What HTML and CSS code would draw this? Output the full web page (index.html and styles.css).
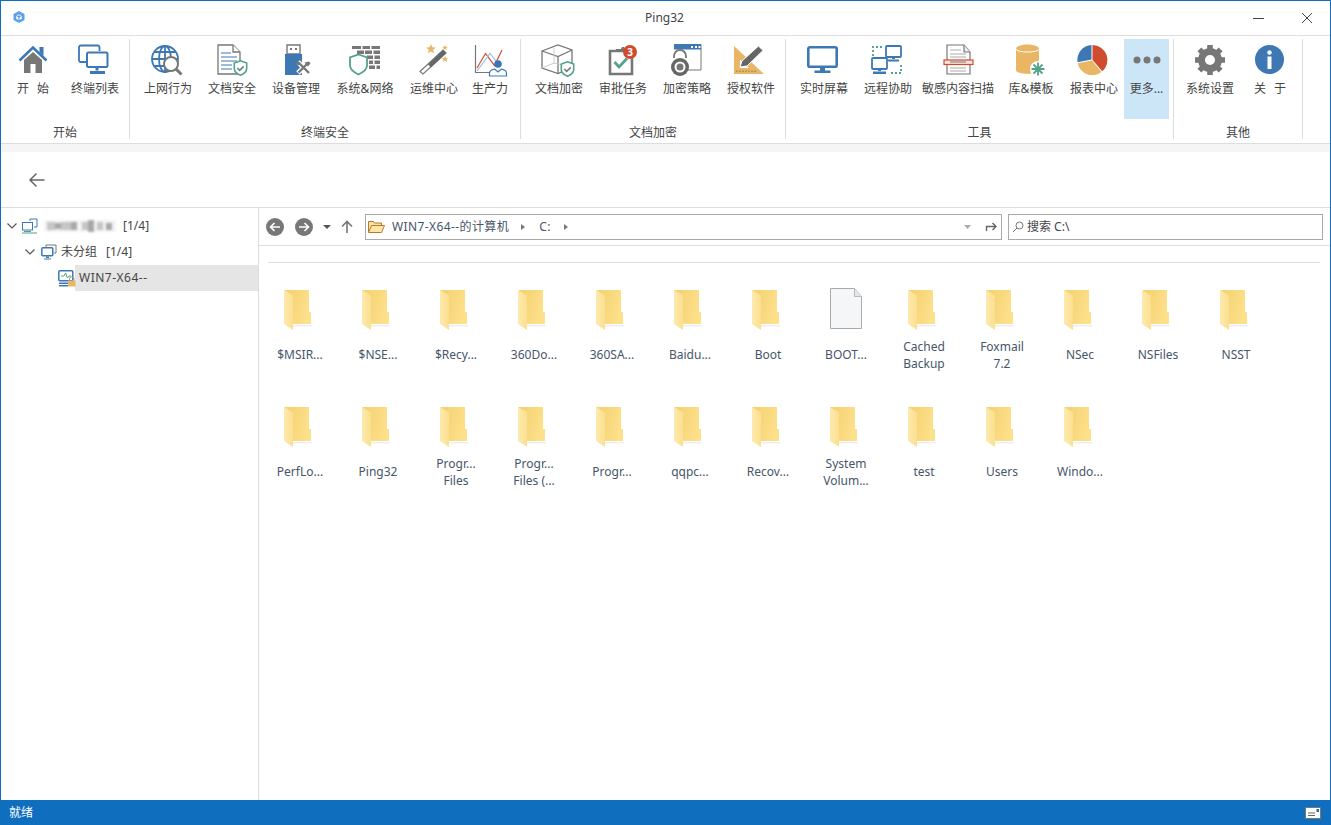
FILE: index.html
```html
<!DOCTYPE html>
<html lang="zh-CN">
<head>
<meta charset="utf-8">
<title>Ping32</title>
<link rel="stylesheet" href="styles.css">
</head>
<body>
<svg class="defs" width="0" height="0">
  <defs>
    <linearGradient id="fb" x1="0" x2="1" y1="0" y2="0.3"><stop offset="0" stop-color="#f3cf6e"/><stop offset="1" stop-color="#fde08a"/></linearGradient>
    <linearGradient id="ff" x1="0" x2="1" y1="0" y2="0"><stop offset="0" stop-color="#fdeaae"/><stop offset="1" stop-color="#fcdf90"/></linearGradient>
    <symbol id="folder" viewBox="0 0 28 41">
      <path d="M9 35h19v1.500H9z" fill="#eee"/>
      <path d="M0 0h25v22h2v12H9V8z" fill="url(#fb)"/>
      <path d="M0 0l9 5.500V40L0 34z" fill="url(#ff)"/>
    </symbol>
    <symbol id="shield" viewBox="0 0 14 15">
      <path d="M7 .8l5.800 2V8c0 3-2.500 5-5.800 6.300C3.700 13 1.200 11 1.200 8V2.800z" fill="#fff" stroke="#52a387" stroke-width="1.500"/>
      <path d="M4 7.500l2.200 2.200L10 6" fill="none" stroke="#777" stroke-width="1.400"/>
    </symbol>
  </defs>
</svg>
<div class="window">
  <header class="titlebar">
    <svg class="logo" width="14" height="14" viewBox="0 0 14 14"><path d="M7 1l5.500 3v6L7 13 1.500 10V4z" fill="#5aa0ef"/><path d="M7 4l2.800 1.500v3.200L7 10.200 4.200 8.700V5.500z" fill="#fff"/><path d="M7 4v6.200M4.200 5.500L7 7l2.800-1.500" stroke="#2f74d0" fill="none" stroke-width=".8"/></svg>
    <span class="title">Ping32</span>
    <svg class="winbtn" width="12" height="12" viewBox="0 0 12 12"><path d="M0 6.500h11" stroke="#444" stroke-width="1"/></svg>
    <svg class="winbtn close" width="12" height="12" viewBox="0 0 12 12"><path d="M1 1l10 10M11 1L1 11" stroke="#444" stroke-width="1"/></svg>
  </header>

  <nav class="ribbon">
    <section class="group g1">
      <div class="items">
        <div class="item w64">
          <svg class="ico" viewBox="0 0 32 32"><path d="M7 16l9-8 9 8v13h-6.500v-9h-5v9H7z" fill="#777"/><path d="M2.500 16.500L16 3.500l13.500 13" fill="none" stroke="#3d78b5" stroke-width="2.600"/><path d="M22.500 3h4v9l-4-4z" fill="#3d78b5"/></svg>
          <span class="spaced">开 始</span>
        </div>
        <div class="item w60">
          <svg class="ico" viewBox="2 0 32 32"><path d="M11 18H3.500a2 2 0 0 1-1.500-1.500V3a2 2 0 0 1 2-1.500h17A2 2 0 0 1 22.500 3v4" fill="none" stroke="#3d78b5" stroke-width="1.800"/><rect x="10" y="8.500" width="20.500" height="14.500" rx="1.500" fill="#fff" stroke="#3d78b5" stroke-width="2"/><path d="M18.500 23.500h3v3h-3zM13 27h15v3H13z" fill="#3d78b5"/></svg>
          <span>终端列表</span>
        </div>
      </div>
      <div class="glabel">开始</div>
    </section>

    <section class="group g2">
      <div class="items">
        <div class="item w64">
          <svg class="ico" viewBox="1 0 32 32"><g fill="none" stroke="#3d78b5" stroke-width="1.800"><circle cx="14" cy="15" r="13"/><ellipse cx="14" cy="15" rx="6" ry="13"/><path d="M1 15h26M3 8h22M3 22h22M14 2v26"/></g><circle cx="20" cy="20" r="7" fill="#fff" stroke="#777" stroke-width="2"/><path d="M25 25l5.500 5.500" stroke="#777" stroke-width="3"/></svg>
          <span>上网行为</span>
        </div>
        <div class="item w64">
          <svg class="ico" viewBox="0 0 32 32"><path d="M2 1h15l7 7v22H2z" fill="#fff" stroke="#777" stroke-width="1.300"/><path d="M17 1v7h7" fill="#fff" stroke="#777" stroke-width="1.300"/><path d="M5 9h10M5 13h16M5 17h16M5 21h11M5 25h11" stroke="#3d78b5" stroke-width="1.200"/><use href="#shield" x="17" y="16" width="15" height="16"/></svg>
          <span>文档安全</span>
        </div>
        <div class="item w64">
          <svg class="ico" viewBox="0 0 32 32"><path d="M7 1h13v9H7z" fill="#fff" stroke="#777" stroke-width="1.400"/><path d="M10 4h2v2h-2zM15 4h2v2h-2z" fill="#777"/><path d="M5 10h17v21H5z" fill="#3d78b5"/><path d="M18 18l11 11M29 18L18 29" stroke="#fff" stroke-width="5"/><path d="M19 19l10 10M28 19L18.500 28.500" stroke="#777" stroke-width="2.400"/><path d="M24.500 18.500l4.500-1 1.500 2-2.500 3zM15.500 20l2-3 3 1.500-2 3z" fill="#777"/></svg>
          <span>设备管理</span>
        </div>
        <div class="item w74">
          <svg class="ico" viewBox="0 0 32 32"><g fill="#777"><path d="M3 2h9v3H3zM13.500 2H21v3h-7.500zM22.500 2H31v3h-8.500zM8 6.500h7V10H8zM16 6.500h7V10h-7zM24.500 6.500H31V10h-6.500zM18 11.500h6V15h-6zM25.500 11.500H31V15h-5.500zM20 16.500h4V20h-4zM25.500 16.500H31V20h-5.500zM20 21.500h6V25h-6zM27.500 21.500H31V25h-3.500z"/></g><path d="M9.500 10.500l8.500 3v8c0 4-3.500 6.500-8.500 9-5-2.500-8.500-5-8.500-9v-8z" fill="#fff" stroke="#52a387" stroke-width="1.800"/></svg>
          <span>系统&amp;网络</span>
        </div>
        <div class="item w64">
          <svg class="ico" viewBox="0 0 32 32"><path d="M2 27.500L25 6l3 3L5 30z" fill="#fff" stroke="#777" stroke-width="1.200"/><path d="M10 20.500l15-14.500 3 3-15 14.500z" fill="#666"/><path d="M13 0l1.400 3.200 3.400.3-2.600 2.300.8 3.400L13 7.500 10 9.200l.8-3.400L8.200 3.500l3.400-.3zM27 1l.8 1.700 1.900.2-1.400 1.300.4 1.900L27 5.100l-1.700 1 .4-1.900-1.400-1.300 1.900-.2zM27 12l.9 2 2.200.2-1.600 1.500.5 2.200-2-1.100-2 1.100.5-2.200-1.600-1.500 2.200-.2z" fill="#e9b665"/></svg>
          <span>运维中心</span>
        </div>
        <div class="item w48">
          <svg class="ico" viewBox="0 0 32 32"><path d="M1.500 1v27.500H21" fill="none" stroke="#777" stroke-width="1.200"/><path d="M3 24L11.500 9.500l9 12L28 6" fill="none" stroke="#cf4d2e" stroke-width="1.200"/><path d="M3 27L16 9.500l8 10" fill="none" stroke="#9dbde0" stroke-width="1.200"/><circle cx="24" cy="20" r="3.800" fill="#3d78b5"/><path d="M15.500 32v-3c0-2.500 3-3.500 5-4l3.500 3 3.500-3c2 .5 5 1.500 5 4v3z" fill="#fff" stroke="#3d78b5" stroke-width="1.200"/></svg>
          <span>生产力</span>
        </div>
      </div>
      <div class="glabel">终端安全</div>
    </section>

    <section class="group g3">
      <div class="items">
        <div class="item w64">
          <svg class="ico" viewBox="0 0 32 32"><g fill="none" stroke="#777" stroke-width="1.300"><path d="M-1 7L15 1l14 5v17l-14 6.500L-1 24z"/><path d="M-1 7l16 5.500L29 6M15 12.500v17"/></g><path d="M-1 24L11 19l18 4M11 19V3.500" fill="none" stroke="#ccc" stroke-width="1"/><use href="#shield" x="17" y="17" width="15" height="16"/></svg>
          <span>文档加密</span>
        </div>
        <div class="item w64">
          <svg class="ico" viewBox="0 0 32 32"><path d="M3 7h22v23H3z" fill="#fff" stroke="#777" stroke-width="2.600"/><path d="M9 5h5l1-2h2l1 2h2v3H9z" fill="#777"/><path d="M7.500 18l4.500 5 8-8.500" fill="none" stroke="#52a387" stroke-width="2.800"/><circle cx="23" cy="8" r="7" fill="#cf4d2e"/><text x="23" y="11.500" text-anchor="middle" class="badge">3</text></svg>
          <span>审批任务</span>
        </div>
        <div class="item w64">
          <svg class="ico" viewBox="0 0 32 32"><path d="M4 .5h26v25.500H16" fill="#fff" stroke="#777" stroke-width="1"/><path d="M3 0h27v5.500H3z" fill="#3d78b5"/><path d="M20 2h2v2h-2zM24 2h2v2h-2zM27.500 2h2v2h-2z" fill="#fff"/><path d="M3 14v-2a6 6 0 0 1 12 0v2" fill="none" stroke="#777" stroke-width="1.800"/><circle cx="9" cy="23" r="9" fill="#666"/><circle cx="9" cy="23" r="5.500" fill="#fff"/><circle cx="9" cy="23" r="3.500" fill="#777"/></svg>
          <span>加密策略</span>
        </div>
        <div class="item w64">
          <svg class="ico" viewBox="0 0 32 32"><path d="M-1 2l30 28H-1zM5 15.500V24h9z" fill="#e9b665" fill-rule="evenodd"/><path d="M2 28v-1.500M5 28v-1.500M8 28v-1.500M11 28v-1.500M14 28v-1.500M17 28v-1.500M20 28v-1.500" stroke="#777"/><path d="M5 23l2-6L23.500 2 28 6.500 12 22z" fill="#666" stroke="#fff" stroke-width="1"/></svg>
          <span>授权软件</span>
        </div>
      </div>
      <div class="glabel">文档加密</div>
    </section>

    <section class="group g4">
      <div class="items">
        <div class="item w64">
          <svg class="ico" viewBox="0 0 32 32"><rect x=".3" y="3.300" width="28.400" height="19.500" rx="1.500" fill="#fff" stroke="#3d78b5" stroke-width="2.600"/><path d="M12 24h5v3h-5zM6.500 26.500h16V29h-16z" fill="#3d78b5"/></svg>
          <span>实时屏幕</span>
        </div>
        <div class="item w64">
          <svg class="ico" viewBox="0 0 32 32"><rect x="14" y="2" width="15" height="11" rx="1" fill="#fff" stroke="#3d78b5" stroke-width="1.800"/><path d="M20 13h3v2h-3zM16 15.500h11v2H16z" fill="#3d78b5"/><rect x="0" y="14" width="15" height="11" rx="1" fill="#fff" stroke="#3d78b5" stroke-width="1.800"/><path d="M6 25h3v2H6zM1 27.500h13V30H1z" fill="#3d78b5"/><path d="M1 12V3h10M19 29h10v-9" fill="none" stroke="#52a387" stroke-width="1.800" stroke-dasharray="2 2"/></svg>
          <span>远程协助</span>
        </div>
        <div class="item w76">
          <svg class="ico" viewBox="0 0 32 32"><path d="M5 1h17l6 7v22H5z" fill="#fff" stroke="#777" stroke-width="1.200"/><path d="M22 1v7h6" fill="#eee" stroke="#777" stroke-width="1.200"/><path d="M8 6h11M8 10h16M8 13h16M8 24h16M8 27h16" stroke="#aaa" stroke-width="1"/><rect x="2" y="16" width="29" height="4.500" fill="#fbe2db" stroke="#cf4d2e" stroke-width="1.200"/><path d="M8 18h16" stroke="#777"/></svg>
          <span>敏感内容扫描</span>
        </div>
        <div class="item w70">
          <svg class="ico" viewBox="0 0 32 32"><path d="M1 5c0-6 23-6 23 0v21c0 5-23 5-23 0z" fill="#e9b665"/><path d="M1 5c0 4 23 4 23 0" fill="none" stroke="#fff" stroke-width="1"/><circle cx="23" cy="25" r="8" fill="#fff"/><path d="M23 18.500v13M16.500 25h13M18.500 20.500l9 9M27.500 20.500l-9 9" stroke="#52a387" stroke-width="1.800"/></svg>
          <span>库&amp;模板</span>
        </div>
        <div class="item w56">
          <svg class="ico" viewBox="2 0 32 32"><path d="M16.500 1a15 15 0 0 1 9.800 26.300L16.500 16z" fill="#cf4d2e"/><path d="M25.500 28a15 15 0 0 1-23.800-8.800l14.300-2.600z" fill="#e9b665"/><path d="M1.500 18.200A15 15 0 0 1 15.500 1v14.500z" fill="#3d78b5"/></svg>
          <span>报表中心</span>
        </div>
        <div class="item w45 active">
          <svg class="ico" viewBox="0 0 32 32"><circle cx="6" cy="16" r="3.500" fill="#777"/><circle cx="16" cy="16" r="3.500" fill="#777"/><circle cx="26" cy="16" r="3.500" fill="#777"/></svg>
          <span>更多...</span>
        </div>
      </div>
      <div class="glabel">工具</div>
    </section>

    <section class="group g5">
      <div class="items">
        <div class="item w64">
          <svg class="ico" viewBox="0 0 32 32"><circle cx="16" cy="16" r="8.500" fill="none" stroke="#777" stroke-width="7"/><path d="M16 1v30M1 16h30M5.400 5.400l21.200 21.200M26.600 5.400L5.400 26.600" stroke="#777" stroke-width="5.500" stroke-dasharray="5 20 5"/></svg>
          <span>系统设置</span>
        </div>
        <div class="item w56">
          <svg class="ico" viewBox="0 0 32 32"><circle cx="15.500" cy="15.500" r="14.500" fill="#3d78b5"/><circle cx="15.500" cy="8.500" r="2.200" fill="#fff"/><path d="M13.500 12.500h4V25h-4z" fill="#fff"/></svg>
          <span class="spaced">关 于</span>
        </div>
      </div>
      <div class="glabel">其他</div>
    </section>
  </nav>

  <div class="band"></div>

  <div class="backbar">
    <svg width="18" height="16" viewBox="0 0 18 16"><path d="M16.500 8H2M8.500 1.500L2 8l6.500 6.500" fill="none" stroke="#666" stroke-width="1.500"/></svg>
  </div>

  <main class="main">
    <aside class="tree">
      <div class="row r1">
        <svg class="chev" width="10" height="6" viewBox="0 0 10 6"><path d="M.5.500L5 5 9.500.500" fill="none" stroke="#555" stroke-width="1.200"/></svg>
        <svg class="ticon" width="16" height="16" viewBox="0 0 16 16"><path d="M8 3V1h7v8h-3" fill="none" stroke="#3d78b5"/><rect x=".5" y="4.500" width="10" height="7.500" fill="#fff" stroke="#3d78b5"/><path d="M2 13.500h7M0 15h15" stroke="#52a387"/></svg>
        <svg class="mosaic" width="72" height="12" viewBox="0 0 72 12"><path d="M0 0h72v12H0z" fill="#f4f4f4"/><g fill="#c6c6c6"><path d="M3 2h8v8H3zM17 2h10v8H17zM38 2h6v8h-6zM53 2h6v8h-6z"/></g><g fill="#a8a8a8"><path d="M11 3h6v6h-6zM27 2h6v8h-6zM44 0h6v12h-6zM62 3h6v7h-6z"/></g></svg>
        <span class="count">[1/4]</span>
      </div>
      <div class="row r2">
        <svg class="chev" width="10" height="6" viewBox="0 0 10 6"><path d="M.5.500L5 5 9.500.500" fill="none" stroke="#555" stroke-width="1.200"/></svg>
        <svg class="ticon" width="16" height="16" viewBox="0 0 16 16"><path d="M5 3V1h10v8h-2" fill="none" stroke="#777"/><rect x=".8" y="3.800" width="11" height="8" rx="1" fill="#fff" stroke="#3d78b5" stroke-width="1.500"/><path d="M5 12.500h3V14H5zM3 14.500h7v1H3z" fill="#3d78b5"/></svg>
        <span class="gname">未分组</span>
        <span class="count">[1/4]</span>
      </div>
      <div class="row r3">
        <svg class="ticon" width="18" height="17" viewBox="0 0 18 17"><rect x=".8" y=".8" width="14" height="10" rx="1" fill="#fff" stroke="#3d78b5" stroke-width="1.500"/><path d="M3 6h3l1.500-3 2 5 1.500-2h2" fill="none" stroke="#52a387"/><path d="M1 12.500h9v1.500H1zM1 15h9v1.500H1z" fill="#3d78b5"/><rect x="10" y="10.500" width="7.500" height="6" fill="#e9b665"/><path d="M11.500 10.500V9a2.200 2.200 0 0 1 4.500 0v1.500" fill="none" stroke="#999"/></svg>
        <span class="host">WIN7-X64--</span>
      </div>
    </aside>

    <section class="browser">
      <div class="toolbar">
        <svg class="navbtn" width="20" height="20" viewBox="0 0 20 20"><circle cx="10" cy="10" r="9" fill="#777"/><path d="M15 10H6M9.500 6L5.500 10l4 4" fill="none" stroke="#fff" stroke-width="1.600"/></svg>
        <svg class="navbtn" width="20" height="20" viewBox="0 0 20 20"><circle cx="10" cy="10" r="9" fill="#777"/><path d="M5 10h9M10.500 6l4 4-4 4" fill="none" stroke="#fff" stroke-width="1.600"/></svg>
        <svg class="drop" width="8" height="4" viewBox="0 0 8 4"><path d="M0 0h8L4 4z" fill="#555"/></svg>
        <svg class="up" width="12" height="13" viewBox="0 0 12 13"><path d="M6 13V1.500M1 6.500l5-5 5 5" fill="none" stroke="#777" stroke-width="1.600"/></svg>
        <div class="address">
          <svg class="afolder" width="17" height="13" viewBox="0 0 17 13"><path d="M.5 12V1.500h5l1 1.500h7v2.500" fill="#fbe3a0" stroke="#b8792e"/><path d="M.5 12.500L3.500 5.500h13l-3 7z" fill="#fde6a6" stroke="#b8792e"/></svg>
          <span class="crumb">WIN7-X64--的计算机</span>
          <span class="sep"></span>
          <span class="crumb c2">C:</span>
          <span class="sep s2"></span>
          <span class="spacer"></span>
          <svg class="adrop" width="7" height="4" viewBox="0 0 7 4"><path d="M0 0h7L3.500 4z" fill="#aaa"/></svg>
          <svg class="ret" width="12" height="9" viewBox="0 0 12 9"><path d="M1.500 9V4.500h9M7.500 1l3.500 3.500L7.500 8" fill="none" stroke="#666" stroke-width="1.400"/></svg>
        </div>
        <div class="search">
          <svg width="12" height="12" viewBox="0 0 12 12"><circle cx="7.500" cy="4.500" r="3.500" fill="none" stroke="#777"/><path d="M5 7l-4 4" stroke="#777"/></svg>
          <span>搜索 C:\</span>
        </div>
      </div>
      <div class="filewrap">
        <div class="files">
          <div class="file"><svg class="ficon"><use href="#folder"/></svg><div class="name">$MSIR...</div></div>
          <div class="file"><svg class="ficon"><use href="#folder"/></svg><div class="name">$NSE...</div></div>
          <div class="file"><svg class="ficon"><use href="#folder"/></svg><div class="name">$Recy...</div></div>
          <div class="file"><svg class="ficon"><use href="#folder"/></svg><div class="name">360Do...</div></div>
          <div class="file"><svg class="ficon"><use href="#folder"/></svg><div class="name">360SA...</div></div>
          <div class="file"><svg class="ficon"><use href="#folder"/></svg><div class="name">Baidu...</div></div>
          <div class="file"><svg class="ficon"><use href="#folder"/></svg><div class="name">Boot</div></div>
          <div class="file"><svg class="ficon doc" viewBox="0 0 32 41"><path d="M.5.500h24l7 8v32H.5z" fill="#f5f6f7" stroke="#aaa"/><path d="M24.500.500v8h7" fill="#e6e6e6" stroke="#bbb"/></svg><div class="name">BOOT...</div></div>
          <div class="file"><svg class="ficon"><use href="#folder"/></svg><div class="name">Cached<br>Backup</div></div>
          <div class="file"><svg class="ficon"><use href="#folder"/></svg><div class="name">Foxmail<br>7.2</div></div>
          <div class="file"><svg class="ficon"><use href="#folder"/></svg><div class="name">NSec</div></div>
          <div class="file"><svg class="ficon"><use href="#folder"/></svg><div class="name">NSFiles</div></div>
          <div class="file"><svg class="ficon"><use href="#folder"/></svg><div class="name">NSST</div></div>
          <div class="file"><svg class="ficon"><use href="#folder"/></svg><div class="name">PerfLo...</div></div>
          <div class="file"><svg class="ficon"><use href="#folder"/></svg><div class="name">Ping32</div></div>
          <div class="file"><svg class="ficon"><use href="#folder"/></svg><div class="name">Progr...<br>Files</div></div>
          <div class="file"><svg class="ficon"><use href="#folder"/></svg><div class="name">Progr...<br>Files (...</div></div>
          <div class="file"><svg class="ficon"><use href="#folder"/></svg><div class="name">Progr...</div></div>
          <div class="file"><svg class="ficon"><use href="#folder"/></svg><div class="name">qqpc...</div></div>
          <div class="file"><svg class="ficon"><use href="#folder"/></svg><div class="name">Recov...</div></div>
          <div class="file"><svg class="ficon"><use href="#folder"/></svg><div class="name">System<br>Volum...</div></div>
          <div class="file"><svg class="ficon"><use href="#folder"/></svg><div class="name">test</div></div>
          <div class="file"><svg class="ficon"><use href="#folder"/></svg><div class="name">Users</div></div>
          <div class="file"><svg class="ficon"><use href="#folder"/></svg><div class="name">Windo...</div></div>
        </div>
      </div>
    </section>
  </main>

  <footer class="status">
    <span>就绪</span>
    <svg width="16" height="12" viewBox="0 0 16 12"><rect x=".5" y=".5" width="15" height="11" fill="#fff" stroke="#777"/><path d="M3 6h7M3 8.500h7" stroke="#666"/><rect x="11.500" y="2" width="2.500" height="3" fill="#1f6fc0"/></svg>
  </footer>
</div>
</body>
</html>
```

FILE: styles.css
```css
* { box-sizing: border-box; }
html, body { margin: 0; padding: 0; }
body {
  width: 1331px;
  height: 825px;
  overflow: hidden;
  background: #fff;
  color: #444;
  font: 12px/16px "Noto Sans", "Noto Sans CJK SC", sans-serif;
}
.defs { display: block; height: 0; }
.window {
  width: 1331px;
  height: 825px;
  display: flex;
  flex-direction: column;
  border: 1px solid #106ebe;
  border-bottom: 0;
}

.titlebar {
  height: 35px;
  flex: none;
  display: flex;
  align-items: center;
  border-bottom: 1px solid #ddd;
  padding-left: 11px;
}
.logo { margin-top: -2px; }
.title { flex: 1; text-align: center; margin-left: 50px; margin-top: -1px; }
.winbtn { margin-right: 36px; }
.winbtn.close { margin-right: 17px; }

.ribbon {
  height: 108px;
  flex: none;
  display: flex;
  padding-top: 3px;
  border-bottom: 1px solid #ddd;
}
.group {
  height: 100px;
  flex: none;
  border-right: 1px solid #ddd;
}
.g1 { width: 129px; }
.g2 { width: 391px; }
.g3 { width: 265px; }
.g4 { width: 388px; }
.g5 { width: 129px; }
.g2 .items, .g3 .items, .g4 .items { padding-left: 6px; }
.g5 .items { padding-left: 4px; }
.items { display: flex; height: 80px; }
.item {
  display: flex;
  flex-direction: column;
  align-items: center;
  padding-top: 5px;
  flex: none;
  white-space: nowrap;
}
.item span { margin-top: 5px; }
.ico { width: 32px; height: 32px; display: block; overflow: visible; }
.spaced { word-spacing: 5px; white-space: pre; }
.w45 { width: 45px; margin-left: 2px; }
.w48 { width: 48px; }
.w56 { width: 56px; }
.w60 { width: 60px; }
.w64 { width: 64px; }
.w70 { width: 70px; }
.w74 { width: 74px; }
.w76 { width: 76px; }
.active { background: #cde6f7; }
.glabel { text-align: center; line-height: 14px; margin-top: 7px; }
.badge { font: bold 10px "Noto Sans", sans-serif; fill: #fff; }

.band { height: 8px; flex: none; background: #f5f5f5; }
.backbar {
  height: 56px;
  flex: none;
  display: flex;
  align-items: center;
  padding-left: 27px;
  border-bottom: 1px solid #ddd;
}

.main { flex: 1; display: flex; min-height: 0; }
.tree {
  width: 258px;
  flex: none;
  border-right: 1px solid #ddd;
  padding-top: 5px;
}
.row { height: 26px; display: flex; align-items: center; }
.r1 { padding-left: 6px; }
.r1 .ticon { margin-left: 5px; }
.mosaic { margin-left: 6px; filter: blur(.8px); }
.r1 .count { margin-left: 7px; }
.r2 { padding-left: 24px; }
.r2 .ticon { margin-left: 6px; }
.gname { margin-left: 4px; }
.r2 .count { margin-left: 9px; }
.r3 { padding-left: 57px; background: linear-gradient(to right, #fff 74px, #e5e5e5 74px); }
.host { margin-left: 3px; letter-spacing: .5px; }

.browser { flex: 1; display: flex; flex-direction: column; min-width: 0; }
.toolbar {
  height: 38px;
  flex: none;
  display: flex;
  align-items: center;
  padding-left: 6px;
  border-bottom: 1px solid #ddd;
}
.navbtn { margin-right: 9px; flex: none; }
.drop { flex: none; }
.up { margin-left: 10px; flex: none; }
.address {
  width: 637px;
  height: 26px;
  margin-left: 12px;
  flex: none;
  display: flex;
  align-items: center;
  border: 1px solid #aaa;
  padding: 0 4px 0 2px;
}
.afolder { flex: none; }
.crumb { margin-left: 7px; margin-top: 1px; letter-spacing: .4px; color: #46566a; }
.c2 { margin-left: 14px; }
.sep {
  width: 0;
  height: 0;
  margin-left: 12px;
  border-left: 4px solid #777;
  border-top: 3px solid transparent;
  border-bottom: 3px solid transparent;
}
.s2 { margin-left: 13px; }
.spacer { flex: 1; }
.adrop { margin-right: 14px; }
.search {
  width: 315px;
  height: 26px;
  margin-left: 6px;
  flex: none;
  display: flex;
  align-items: center;
  gap: 3px;
  border: 1px solid #aaa;
  padding-left: 3px;
}
.search span { margin-top: 1px; }
.filewrap { flex: 1; padding: 16px 10px 0 9px; min-height: 0; }
.files {
  border-top: 1px solid #ddd;
  padding-top: 17px;
  display: grid;
  grid-template-columns: repeat(13, 78px);
  grid-auto-rows: 117px;
}
.file { display: flex; flex-direction: column; align-items: center; margin-left: -7px; margin-right: 7px; }
.ficon { width: 28px; height: 41px; margin: 10px 5px 7px 0; flex: none; display: block; }
.ficon.doc { width: 32px; margin: 8px 0 9px; }
.name {
  height: 33px;
  display: flex;
  align-items: center;
  text-align: center;
  line-height: 17px;
  color: #46566a;
}

.status {
  height: 25px;
  flex: none;
  background: #106ebe;
  color: #fff;
  display: flex;
  align-items: center;
  justify-content: space-between;
  margin: 0 -1px;
  padding: 0 10px 0 9px;
}
```
